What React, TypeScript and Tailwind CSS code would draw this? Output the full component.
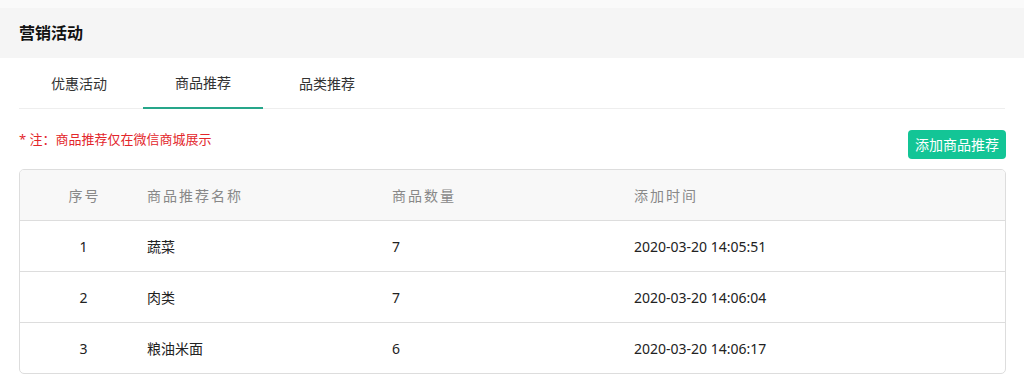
import React from "react";

const rows = [
  { id: 1, name: "蔬菜", count: 7, time: "2020-03-20 14:05:51" },
  { id: 2, name: "肉类", count: 7, time: "2020-03-20 14:06:04" },
  { id: 3, name: "粮油米面", count: 6, time: "2020-03-20 14:06:17" },
];

const font = { fontFamily: '"Noto Sans", "Noto Sans CJK SC", sans-serif' };

export default function App() {
  return (
    <div className="w-[1024px] h-[383px] bg-white overflow-hidden" style={font}>
      <div className="h-[8px] bg-[#fafafa]" />
      <div className="h-[50px] bg-[#f5f5f5] flex items-center px-[19px]">
        <span className="text-[16px] font-bold text-[#111]">营销活动</span>
      </div>
      <div className="px-[19px]">
        <div className="flex gap-[4px] h-[51px] border-b border-[#eeeeee] text-[14px] text-[#333]">
          <div className="w-[120px] flex items-center justify-center">优惠活动</div>
          <div className="w-[120px] flex items-center justify-center border-b-2 border-[#26a68a] -mb-px">商品推荐</div>
          <div className="w-[120px] flex items-center justify-center">品类推荐</div>
        </div>
        <div className="flex justify-between items-start pt-[21px]">
          <span className="text-[13px] text-[#e3262b] leading-[18px]">* 注：商品推荐仅在微信商城展示</span>
          <button className="h-[29px] w-[98px] rounded-[4px] bg-[#13c596] text-white text-[14px] mr-[-1px]">添加商品推荐</button>
        </div>
        <div className="mt-[10px] w-[987px] border border-[#dddddd] rounded-[5px] overflow-hidden">
          <div className="grid grid-cols-[127px_245px_242px_1fr] h-[51px] items-center bg-[#f8f8f8] border-b border-[#dddddd] text-[14px] text-[#888] tracking-[2px]">
            <div className="text-center pl-[2px]">序号</div>
            <div>商品推荐名称</div>
            <div>商品数量</div>
            <div>添加时间</div>
          </div>
          {rows.map((r, i) => (
            <div
              key={r.id}
              className={`grid grid-cols-[127px_245px_242px_1fr] items-center text-[14px] text-[#222] ${i < rows.length - 1 ? "h-[51px] border-b border-[#dddddd]" : "h-[50px]"}`}
            >
              <div className="text-center">{r.id}</div>
              <div>{r.name}</div>
              <div>{r.count}</div>
              <div>{r.time}</div>
            </div>
          ))}
        </div>
      </div>
    </div>
  );
}
